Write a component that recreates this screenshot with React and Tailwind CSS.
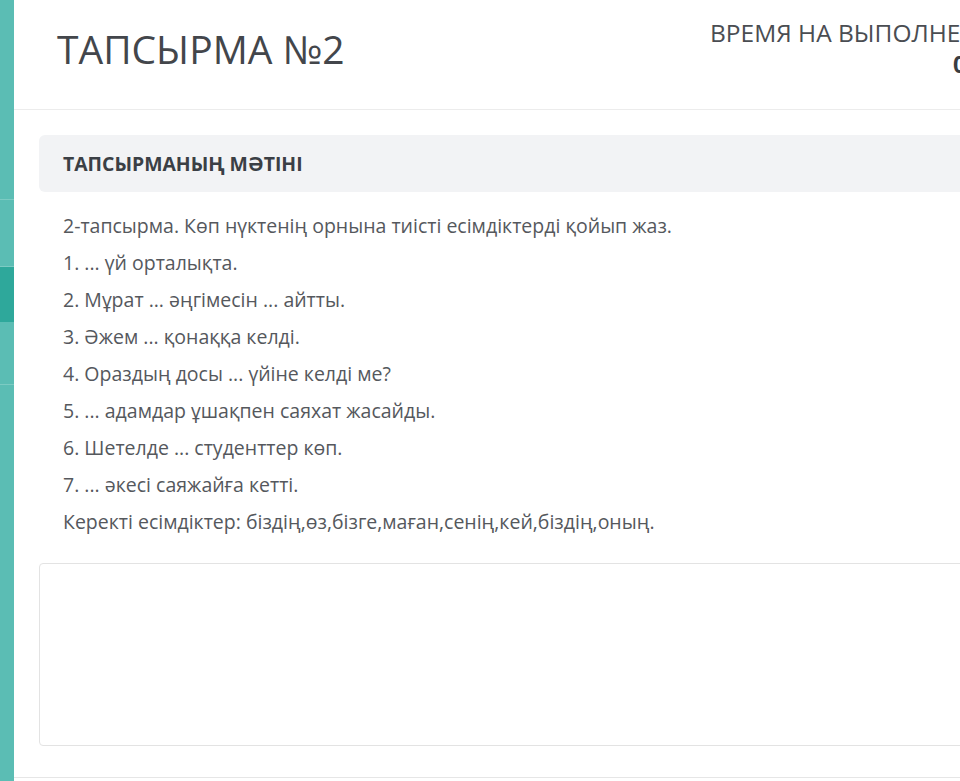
const lines = [
    '2-тапсырма. Көп нүктенің орнына тиісті есімдіктерді қойып жаз.',
    '1. ... үй орталықта.',
    '2. Мұрат ... әңгімесін ... айтты.',
    '3. Әжем ... қонаққа келді.',
    '4. Ораздың досы ... үйіне келді ме?',
    '5. ... адамдар ұшақпен саяхат жасайды.',
    '6. Шетелде ... студенттер көп.',
    '7. ... әкесі саяжайға кетті.',
    'Керекті есімдіктер: біздің,өз,бізге,маған,сенің,кей,біздің,оның.',
];

function SideStrip() {
    return (
        <aside className="flex w-[14px] shrink-0 flex-col bg-[#5bbdb4]">
            <div className="h-[200px] border-b border-[#7ccbc3]" />
            <div className="h-[67px] border-b border-[#7ccbc3]" />
            <div className="h-[55px] bg-[#2ea89b]" />
            <div className="h-[63px] border-b border-[#7ccbc3]" />
            <div className="flex-1" />
        </aside>
    );
}

export default function App() {
    return (
        <div
            className="flex h-[781px] w-[960px] overflow-hidden bg-white text-[#4a4d52]"
            style={{ fontFamily: '"Open Sans", "Noto Sans", sans-serif' }}
        >
            <SideStrip />

            <main className="flex min-w-0 flex-1 flex-col">
                <header className="flex h-[110px] shrink-0 items-start justify-between border-b border-[#ececec] pl-[43px]">
                    <h1 className="mt-[24px] whitespace-nowrap text-[39px] font-normal leading-[50px] text-[#43464b]">
                        ТАПСЫРМА №2
                    </h1>
                    <div className="mr-[-230px] mt-[18px] flex w-[480px] shrink-0 flex-col">
                        <span className="whitespace-nowrap text-[24.5px] leading-[30px] text-[#4a4d52]">
                            ВРЕМЯ НА ВЫПОЛНЕНИЕ ЗАДАНИЯ
                        </span>
                        <span className="pl-[243px] text-[23px] font-bold leading-[32px] text-[#3a3d42]">
                            00:00
                        </span>
                    </div>
                </header>

                <section className="flex flex-col pl-[25px] pt-[25px]">
                    <div className="mr-[-40px] flex h-[57px] items-center rounded-md bg-[#f2f3f5] pl-[24px]">
                        <h2 className="text-[19.4px] font-bold text-[#3b3f45]">ТАПСЫРМАНЫҢ МӘТІНІ</h2>
                    </div>

                    <div className="flex flex-col pl-[24px] pt-[15px]">
                        {lines.map((line, i) => (
                            <p key={i} className="whitespace-nowrap text-[19.5px] leading-[37px] text-[#55585d]">
                                {line}
                            </p>
                        ))}
                    </div>

                    <div className="mr-[-40px] mt-[23px] h-[183px] rounded border border-[#e3e3e3] bg-white" />
                </section>

                <div className="mt-[31px] border-t border-[#e6e6e6]" />
            </main>
        </div>
    );
}
